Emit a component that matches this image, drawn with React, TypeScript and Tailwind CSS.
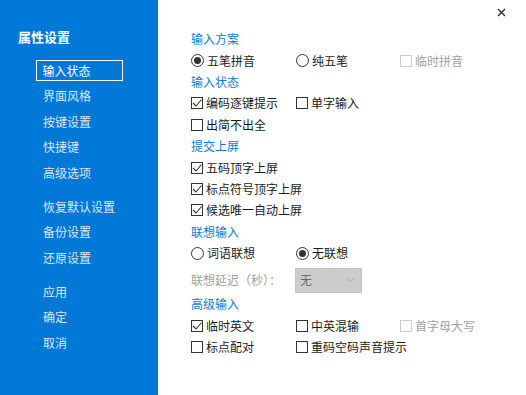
import React from "react";

const font = { fontFamily: '"Noto Sans CJK SC", "Microsoft YaHei", sans-serif' };

function Check({ checked, disabled }: { checked?: boolean; disabled?: boolean }) {
  return (
    <span
      className={
        "inline-flex h-[12px] w-[12px] shrink-0 items-center justify-center border bg-white " +
        (disabled ? "border-[#cccccc]" : "border-[#333333]")
      }
    >
      {checked && (
        <svg width="10" height="10" viewBox="0 0 10 10">
          <path d="M1 5 L4 8 L9.5 1.5" fill="none" stroke="#333" strokeWidth="1.1" />
        </svg>
      )}
    </span>
  );
}

function Radio({ checked }: { checked?: boolean }) {
  return (
    <span className="inline-flex h-[13px] w-[13px] shrink-0 items-center justify-center rounded-full border border-[#333333] bg-white">
      {checked && <span className="h-[7px] w-[7px] rounded-full bg-[#333333]" />}
    </span>
  );
}

function Item({
  kind,
  label,
  checked,
  disabled,
  w,
}: {
  kind: "c" | "r";
  label: string;
  checked?: boolean;
  disabled?: boolean;
  w?: string;
}) {
  return (
    <div className={"flex items-center gap-[3px] " + (w ?? "")}>
      {kind === "c" ? <Check checked={checked} disabled={disabled} /> : <Radio checked={checked} />}
      <span className={disabled ? "text-[#a0a0a0]" : "text-[#1a1a1a]"}>{label}</span>
    </div>
  );
}

function Header({ children }: { children: React.ReactNode }) {
  return <div className="flex h-[21.4px] items-center text-[#0c7bd6]">{children}</div>;
}

function Row({ children }: { children: React.ReactNode }) {
  return <div className="flex h-[21.4px] items-center">{children}</div>;
}

export default function App() {
  const nav1 = ["界面风格", "按键设置", "快捷键", "高级选项"];
  const nav2 = ["恢复默认设置", "备份设置", "还原设置"];
  const nav3 = ["应用", "确定", "取消"];
  return (
    <div className="flex h-[395px] w-[526px] bg-white text-[12px] leading-none" style={font}>
      <div className="flex w-[158px] shrink-0 flex-col bg-[#0078d7]">
        <div className="mt-[30px] ml-[18px] h-[14px] text-[13px] font-bold text-white">属性设置</div>
        <div className="mt-[14px] flex flex-col">
          <div className="flex h-[25.5px] items-center">
            <div className="ml-[36px] flex h-[21px] w-[87px] items-center border-[1.5px] border-white pl-[5.5px] text-white">
              输入状态
            </div>
          </div>
          {nav1.map((t) => (
            <div key={t} className="flex h-[25.5px] items-center pl-[43px] text-[#dfe6ee]">
              {t}
            </div>
          ))}
        </div>
        <div className="mt-[8.5px] flex flex-col">
          {nav2.map((t) => (
            <div key={t} className="flex h-[25.5px] items-center pl-[43px] text-[#dfe6ee]">
              {t}
            </div>
          ))}
        </div>
        <div className="mt-[8.5px] flex flex-col">
          {nav3.map((t) => (
            <div key={t} className="flex h-[25.5px] items-center pl-[43px] text-[#dfe6ee]">
              {t}
            </div>
          ))}
        </div>
      </div>

      <div className="relative flex flex-1 flex-col pt-[28.5px] pl-[33px]">
        <button className="absolute top-[7px] right-[20px] flex h-[10px] w-[10px] items-center justify-center">
          <svg width="9" height="9" viewBox="0 0 9 9">
            <path d="M1 1 L8 8 M8 1 L1 8" stroke="#222" strokeWidth="1.3" />
          </svg>
        </button>

        <Header>输入方案</Header>
        <Row>
          <Item kind="r" label="五笔拼音" checked w="w-[105px]" />
          <Item kind="r" label="纯五笔" w="w-[104px]" />
          <Item kind="c" label="临时拼音" disabled />
        </Row>
        <Header>输入状态</Header>
        <Row>
          <Item kind="c" label="编码逐键提示" checked w="w-[105px]" />
          <Item kind="c" label="单字输入" />
        </Row>
        <Row>
          <Item kind="c" label="出简不出全" />
        </Row>
        <Header>提交上屏</Header>
        <Row>
          <Item kind="c" label="五码顶字上屏" checked />
        </Row>
        <Row>
          <Item kind="c" label="标点符号顶字上屏" checked />
        </Row>
        <Row>
          <Item kind="c" label="候选唯一自动上屏" checked />
        </Row>
        <Header>联想输入</Header>
        <Row>
          <Item kind="r" label="词语联想" w="w-[105px]" />
          <Item kind="r" label="无联想" checked />
        </Row>
        <div className="flex h-[30px] items-center pt-[3px]">
          <span className="w-[104px] text-[#a0a0a0]">联想延迟（秒）：</span>
          <div className="flex h-[25px] w-[67px] items-center justify-between border border-[#c4c4c4] bg-[#cccccc] pr-[6px] pl-[4px]">
            <span className="text-[#6d6d6d]">无</span>
            <svg width="9" height="6" viewBox="0 0 9 6">
              <path d="M0.5 0.8 L4.5 4.8 L8.5 0.8" fill="none" stroke="#a8a8a8" strokeWidth="1" />
            </svg>
          </div>
        </div>
        <Header>高级输入</Header>
        <Row>
          <Item kind="c" label="临时英文" checked w="w-[105px]" />
          <Item kind="c" label="中英混输" w="w-[104px]" />
          <Item kind="c" label="首字母大写" disabled />
        </Row>
        <Row>
          <Item kind="c" label="标点配对" w="w-[105px]" />
          <Item kind="c" label="重码空码声音提示" />
        </Row>
      </div>
    </div>
  );
}
